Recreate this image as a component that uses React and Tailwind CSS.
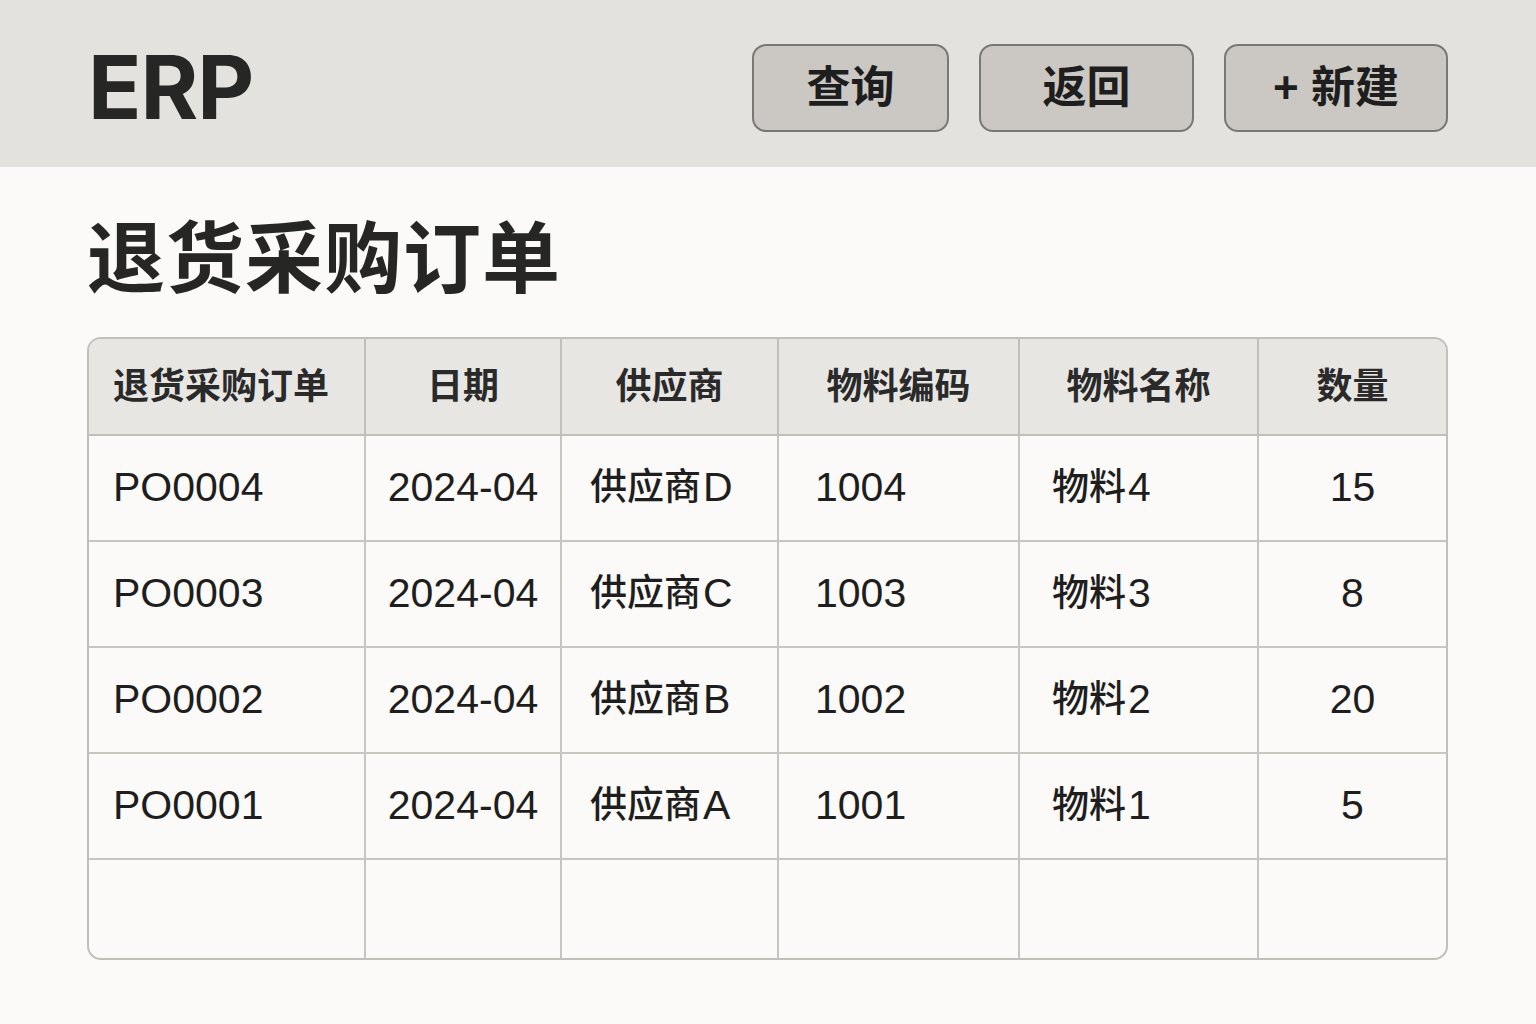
const cjk = { fontFamily: '"Liberation Sans", "Noto Sans CJK SC", sans-serif' };

const cols = [
  { w: "w-[277px]", head: "退货采购订单", headAlign: "justify-start pl-6", bodyAlign: "justify-start pl-6" },
  { w: "w-[196px]", head: "日期", headAlign: "justify-center", bodyAlign: "justify-center" },
  { w: "w-[217px]", head: "供应商", headAlign: "justify-center", bodyAlign: "justify-start pl-7" },
  { w: "w-[241px]", head: "物料编码", headAlign: "justify-center", bodyAlign: "justify-start pl-9" },
  { w: "w-[239px]", head: "物料名称", headAlign: "justify-center", bodyAlign: "justify-start pl-8" },
  { w: "flex-1", head: "数量", headAlign: "justify-center", bodyAlign: "justify-center" },
];

const rows = [
  ["PO0004", "2024-04", "供应商D", "1004", "物料4", "15"],
  ["PO0003", "2024-04", "供应商C", "1003", "物料3", "8"],
  ["PO0002", "2024-04", "供应商B", "1002", "物料2", "20"],
  ["PO0001", "2024-04", "供应商A", "1001", "物料1", "5"],
];

// CJK glyphs in the cells are drawn a bit smaller than the latin ones
const CellText = ({ text }) => {
  const parts = text.split(/([\u4e00-\u9fff]+)/).filter(Boolean);
  return parts.map((p, i) =>
    /[\u4e00-\u9fff]/.test(p) ? (
      <span key={i} className="text-[37px] font-medium mr-[2px]">
        {p}
      </span>
    ) : (
      <span key={i}>{p}</span>
    )
  );
};

const HeaderButton = ({ children, className }) => (
  <button
    className={`h-[88px] rounded-[14px] border-2 border-[#7a7875] bg-[#cbc8c3] text-[44px] font-bold text-[#1e1e1e] ${className}`}
    style={cjk}
  >
    {children}
  </button>
);

export default function App() {
  return (
    <div className="min-h-screen w-full bg-[#fbfaf8] text-[#222]">
      <header className="h-[167px] bg-[#e4e2de] flex items-center px-[88px]">
        <h1
          className="text-[88px] font-bold leading-none tracking-[-1px] text-[#262624] mt-[6px]"
          style={{ fontFamily: "Inter, sans-serif" }}
        >
          ERP
        </h1>
        <div className="ml-auto flex gap-[30px] mt-[9px]">
          <HeaderButton className="w-[197px]">查询</HeaderButton>
          <HeaderButton className="w-[215px]">返回</HeaderButton>
          <HeaderButton className="w-[224px]">+ 新建</HeaderButton>
        </div>
      </header>

      <main className="px-[87px]">
        <h2
          className="mt-[54px] text-[78px] font-bold leading-none text-[#262624] tracking-[1px]"
          style={cjk}
        >
          退货采购订单
        </h2>

        <div className="mt-[38px] w-[1361px] border-2 border-[#c2bfbb] rounded-[14px] overflow-hidden">
          <div className="flex h-[97px] bg-[#e8e6e3] border-b-2 border-[#c2bfbb]">
            {cols.map((c, i) => (
              <div
                key={c.head}
                className={`${c.w} flex items-center ${c.headAlign} text-[36px] font-bold text-[#2a2a2a] ${
                  i < cols.length - 1 ? "border-r-2 border-[#c2bfbb]" : ""
                }`}
                style={cjk}
              >
                {c.head}
              </div>
            ))}
          </div>
          {rows.map((r) => (
            <div key={r[0]} className="flex h-[106px] border-b-2 border-[#c8c5c1]">
              {r.map((v, i) => (
                <div
                  key={i}
                  className={`${cols[i].w} flex items-center ${cols[i].bodyAlign} text-[41px] text-[#1e1e1e] ${
                    i < cols.length - 1 ? "border-r-2 border-[#c8c5c1]" : ""
                  }`}
                  style={cjk}
                >
                  <CellText text={v} />
                </div>
              ))}
            </div>
          ))}
          <div className="flex h-[98px]">
            {cols.map((c, i) => (
              <div
                key={i}
                className={`${c.w} ${i < cols.length - 1 ? "border-r-2 border-[#c8c5c1]" : ""}`}
              />
            ))}
          </div>
        </div>
      </main>
    </div>
  );
}
